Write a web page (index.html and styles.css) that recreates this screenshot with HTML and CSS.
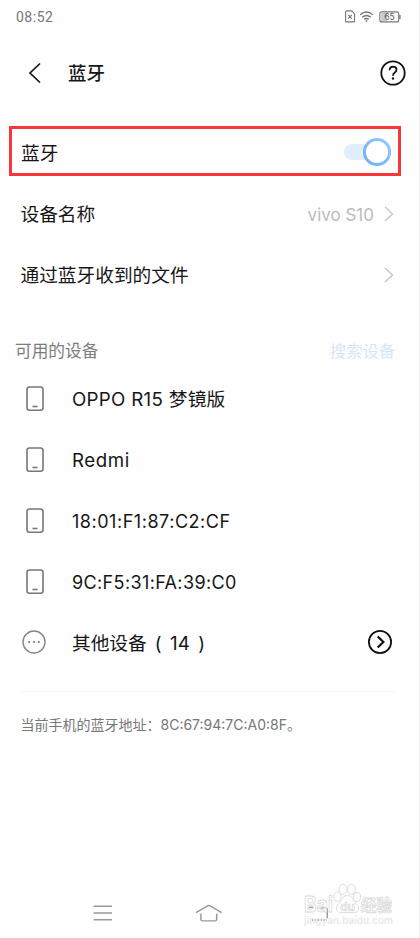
FILE: index.html
```html
<!DOCTYPE html>
<html lang="zh-CN">
<head>
<meta charset="utf-8">
<title>蓝牙</title>
<link rel="stylesheet" href="styles.css">
</head>
<body>
<main class="screen">
  <div class="status">
    <span class="time">08:52</span>
    <svg class="status-icons" width="56" height="14" viewBox="0 0 56 14" fill="none" stroke="#777" stroke-width="1.1">
      <path d="M1.600.9h5.100l2.800 2.800v7.200q0 1-1 1H1.600q-1 0-1-1V1.900q0-1 1-1z"/>
      <path d="M3.300 5l3.400 3.600M6.700 5L3.300 8.600"/>
      <g stroke-width="1.500"><path d="M15.200 4.700q6.300-5.300 12.600 0M17.300 7.200q4.200-3.500 8.400 0M19.300 9.400q2.200-1.800 4.400 0"/></g>
      <path d="M20.200 10.800q1.300-1 2.600 0l-1.300 1.500z" fill="#777" stroke="none"/>
      <rect x="36" y="3" width="6" height="8" fill="#ccc" stroke="none"/>
      <rect x="34.800" y="1.900" width="18.900" height="10" rx="2"/>
      <path d="M54.900 5v4" stroke-width="1.400"/>
      <text x="39.200" y="10.200" class="battery">65</text>
    </svg>
  </div>
  <header class="header">
    <svg class="back" width="14" height="22" viewBox="0 0 14 22" fill="none" stroke="#151515" stroke-width="1.700"><path d="M12 1.500L2 11l10 9.500"/></svg>
    <h1 class="title">蓝牙</h1>
    <svg class="help" width="26" height="26" viewBox="0 0 26 26" fill="none" stroke="#111" stroke-width="1.800">
      <circle cx="13" cy="13" r="11.700"/>
      <path d="M9.600 10.300q.2-3.600 3.500-3.600 3.400.1 3.400 3.100 0 1.600-1.700 2.700-1.800 1.200-1.800 3.200"/>
      <circle cx="13" cy="18.500" r="1.200" fill="#111" stroke="none"/>
    </svg>
  </header>
  <section class="toggle-row">
    <span class="label">蓝牙</span>
    <svg class="switch" width="49" height="30" viewBox="0 0 49 30">
      <defs><linearGradient id="ring" x1="1" y1="0" x2="0" y2="1"><stop offset="0" stop-color="#94cafb"/><stop offset="1" stop-color="#70aefa"/></linearGradient></defs>
      <rect x="1" y="7" width="40" height="16" rx="8" fill="#e0eefe"/>
      <circle cx="34" cy="15" r="12.600" fill="#fff" stroke="url(#ring)" stroke-width="3"/>
    </svg>
  </section>
  <div class="row">
    <span class="label">设备名称</span>
    <span class="value">vivo S10</span>
    <svg class="chevron" width="10" height="16" viewBox="0 0 10 16"><path d="M1 1l7.500 7L1 15"/></svg>
  </div>
  <div class="row">
    <span class="label">通过蓝牙收到的文件</span>
    <svg class="chevron" width="10" height="16" viewBox="0 0 10 16"><path d="M1 1l7.500 7L1 15"/></svg>
  </div>
  <div class="section-head"><span>可用的设备</span><span class="search">搜索设备</span></div>
  <div class="device">
    <svg class="phone" width="18" height="26" viewBox="0 0 18 26"><rect x="1" y="1" width="16" height="23.200" rx="2.400"/><path d="M6.500 20.500h5"/></svg>
    <span class="name">OPPO R15 梦镜版</span>
  </div>
  <div class="device">
    <svg class="phone" width="18" height="26" viewBox="0 0 18 26"><rect x="1" y="1" width="16" height="23.200" rx="2.400"/><path d="M6.500 20.500h5"/></svg>
    <span class="name redmi">Redmi</span>
  </div>
  <div class="device">
    <svg class="phone" width="18" height="26" viewBox="0 0 18 26"><rect x="1" y="1" width="16" height="23.200" rx="2.400"/><path d="M6.500 20.500h5"/></svg>
    <span class="name mac first">18:01:F1:87:C2:CF</span>
  </div>
  <div class="device">
    <svg class="phone" width="18" height="26" viewBox="0 0 18 26"><rect x="1" y="1" width="16" height="23.200" rx="2.400"/><path d="M6.500 20.500h5"/></svg>
    <span class="name mac">9C:F5:31:FA:39:C0</span>
  </div>
  <div class="device">
    <svg class="more" width="24" height="24" viewBox="0 0 24 24"><circle cx="12" cy="12" r="11" fill="none" stroke="#858585" stroke-width="1.400"/><g fill="#777"><circle cx="7.200" cy="12" r="1.100"/><circle cx="12" cy="12" r="1.100"/><circle cx="16.800" cy="12" r="1.100"/></g></svg>
    <span class="name">其他设备<span class="count"><span>(</span><span>14</span><span>)</span></span></span>
    <svg class="go" width="26" height="26" viewBox="0 0 26 26" fill="none" stroke="#111"><circle cx="13" cy="13" r="11.100" stroke-width="1.800"/><path d="M10.700 7.500l5.700 5.500-5.700 5.500" stroke-width="2.200"/></svg>
  </div>
  <footer class="address"><span>当前手机的蓝牙地址：</span><span class="address-mac">8C:67:94:7C:A0:8F</span><span>。</span></footer>
  <nav class="nav">
    <svg width="20" height="18" viewBox="0 0 20 18"><path d="M.7 2.200h18.600M.7 9h18.600M.7 15.800h18.600"/></svg>
    <svg width="28" height="18" viewBox="0 0 28 18"><path d="M1 8.700L12.700 1.700q1.300-.7 2.600 0L27 8.700M6 9.800v5.500q0 1.700 1.700 1.700h12.600q1.700 0 1.700-1.700V9.800"/></svg>
    <svg class="recent" width="22" height="18" viewBox="0 0 22 18"><path d="M1 3.300h5M9 3.800h9q1.500 0 1.500 1.500v9"/><path d="M4 16h15" stroke-dasharray="1.800 1"/></svg>
  </nav>
  <svg class="watermark" width="98" height="56" viewBox="0 0 98 56">
    <g class="mark">
      <ellipse cx="36.500" cy="16.500" rx="3.600" ry="4.700"/><ellipse cx="42" cy="9.300" rx="4" ry="5"/><ellipse cx="50.500" cy="9.300" rx="4" ry="5"/><ellipse cx="56" cy="17" rx="3.700" ry="4.700"/>
      <path d="M46.500 15.500c5 0 5.500 5 9 8.500 3 3 3 8.500-2 8.500H39.500c-5 0-5-5.500-2-8.500 3.500-3.500 4-8.500 9-8.500z"/>
    </g>
    <text class="brand" x="3" y="32" textLength="29" lengthAdjust="spacingAndGlyphs">Bai</text>
    <text class="du" x="39" y="31">du</text>
    <text class="brand cn" x="60" y="31" textLength="31" lengthAdjust="spacingAndGlyphs">经验</text>
    <text class="url" x="3" y="43.500" textLength="89" lengthAdjust="spacingAndGlyphs">jingyan.baidu.com</text>
  </svg>
</main>
</body>
</html>
```
FILE: styles.css
```css
* { box-sizing: border-box; }
body { margin: 0; background: #fefefe; font-family: Inter, "Noto Sans CJK SC", sans-serif; color: #161616; }
.screen { position: relative; width: 420px; height: 938px; overflow: hidden; display: flex; flex-direction: column; border-right: 1px solid #ececec; }
.status { height: 34px; flex: none; display: flex; align-items: center; justify-content: space-between; padding: 0 18px 0 16px; }
.time { font: 14px/20px Roboto, sans-serif; color: #777; letter-spacing: .5px; }
.battery { font: 8.5px Inter, sans-serif; fill: #555; stroke: none; }
.header { height: 78px; flex: none; display: flex; align-items: center; padding: 0 13px 0 28px; }
.title { margin: 0 auto 0 26px; font-size: 18.5px; line-height: 28px; font-weight: 500; }
.toggle-row { width: 392px; height: 50px; flex: none; margin: 14px 0 8px 9px; border: 3px solid #f83838; display: flex; align-items: center; justify-content: space-between; padding: 3px 6px 0 9px; }
.toggle-row .label { padding-top: 2px; }
.switch { margin-top: -2px; }
.label { font-size: 18.7px; line-height: 28px; }
.row { height: 61px; flex: none; display: flex; align-items: center; padding: 0 25px 0 20.5px; }
.row .label { margin-right: auto; }
.value { font-size: 17px; line-height: 24px; color: #bcbcbc; margin-right: 10px; }
.chevron { margin-top: -2px; }
.chevron path { fill: none; stroke: #c8c8c8; stroke-width: 1.5; }
.section-head { height: 36px; flex: none; margin-top: 27px; padding: 0 24px 0 15px; display: flex; align-items: center; justify-content: space-between; font-size: 16.7px; line-height: 24px; color: #7c7c7c; }
.search { font-size: 16.3px; color: #d4e7fb; }
.device { height: 61px; flex: none; display: flex; align-items: center; padding: 0 26px 0 22px; }
.phone { margin: -2px 28px 0 4px; fill: none; stroke: #777; stroke-width: 1.6; }
.more { flex: none; margin: -3px 26px 0 0; }
.go { margin-top: -3px; }
.name { font-size: 18.7px; line-height: 28px; margin-right: auto; white-space: nowrap; letter-spacing: .3px; }
.more + .name { letter-spacing: 0; }
.redmi { letter-spacing: .55px; }
.mac { font-size: 18px; letter-spacing: .37px; }
.first { letter-spacing: .53px; }
.count { display: inline-flex; gap: 8px; margin-left: 8px; letter-spacing: .3px; }
.address { height: 66px; flex: none; margin: 17px 24px 0 20.5px; border-top: 1px solid #f5f5f5; display: flex; align-items: center; font-size: 14px; line-height: 20px; color: #777; white-space: nowrap; }
.nav { flex: none; margin-top: 147px; height: 18px; display: flex; padding: 0 89px 0 93px; }
.nav svg + svg { margin-left: 82px; }
.nav .recent { margin-left: 86px; }
.nav path { fill: none; stroke: #999; stroke-width: 1.5; }
.watermark { position: absolute; left: 301px; top: 880px; font-family: Inter, "Noto Sans CJK SC", sans-serif; }
.mark ellipse, .mark path { fill: #fefefe; stroke: #ddd; stroke-width: 1; }
.brand { font-size: 21px; font-weight: 700; fill: #fefefe; fill-opacity: .65; stroke: #dadada; stroke-width: .8; }
.cn { font-size: 15.5px; }
.du { font-size: 12px; font-weight: 600; fill: #fefefe; stroke: #d5d5d5; stroke-width: .7; }
.url { font-size: 10.5px; fill: #e9e9e9; font-weight: 600; }
```
